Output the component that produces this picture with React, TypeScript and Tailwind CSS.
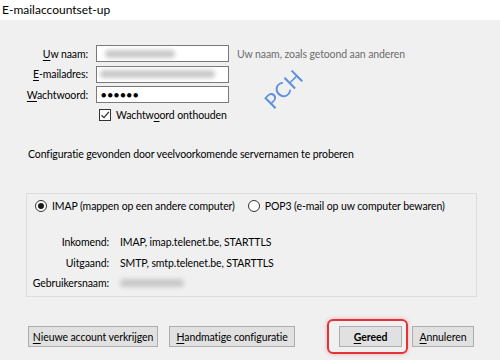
import React from "react";

const font = { fontFamily: 'Lato, "Noto Sans", sans-serif' };

const U = ({ children }: { children: React.ReactNode }) => (
  <span className="underline underline-offset-2">{children}</span>
);

const Blur = ({ w }: { w: string }) => (
  <div className={`h-[8px] ${w} rounded-sm bg-[#c9c9c9] blur-[2px]`} />
);

const Btn = ({ children, bold, w }: { children: React.ReactNode; bold?: boolean; w: string }) => (
  <div
    className={`h-[21px] ${w} flex items-center justify-center border border-[#adadad] bg-[#e1e1e1] text-black whitespace-nowrap ${
      bold ? "font-bold" : ""
    }`}
  >
    {children}
  </div>
);

const Radio = ({ checked }: { checked?: boolean }) => (
  <div className="w-[12px] h-[12px] rounded-full border border-[#333] bg-white flex items-center justify-center">
    {checked && <div className="w-[6px] h-[6px] rounded-full bg-[#1a1a1a]" />}
  </div>
);

export default function App() {
  return (
    <div
      className="w-[500px] h-[360px] bg-[#f0f0f0] flex flex-col overflow-hidden text-[10.5px] leading-[14px] tracking-[-0.1px] text-black whitespace-nowrap"
      style={font}
    >
      <div className="h-[20px] bg-white px-[2px] flex items-center leading-none text-[12px] tracking-normal">
        E-mailaccountset-up
      </div>

      <div className="relative flex flex-col">
        {/* form */}
        <div className="mt-[25px] grid grid-cols-[88px_133px_auto] gap-x-[8px] gap-y-[3.5px] items-center">
          <div className="text-right">
            <U>U</U>w naam:
          </div>
          <div className="h-[17px] border border-[#7a7a7a] bg-white flex items-center px-[8px]">
            <Blur w="w-[70px]" />
          </div>
          <div className="text-[#6d6d6d]">Uw naam, zoals getoond aan anderen</div>

          <div className="text-right">
            <U>E</U>-mailadres:
          </div>
          <div className="h-[17px] border border-[#7a7a7a] bg-white flex items-center px-[3px]">
            <Blur w="w-[115px]" />
          </div>
          <div />

          <div className="text-right">
            <U>W</U>achtwoord:
          </div>
          <div className="h-[17px] border border-[#7a7a7a] bg-white flex items-center px-[4px] text-[9px] tracking-[1px] leading-none">
            ●●●●●●
          </div>
          <div />
        </div>

        <div className="mt-[5px] h-[14px] ml-[99px] flex items-center gap-[5px]">
          <div className="w-[12px] h-[12px] border border-[#333] bg-white flex items-center justify-center">
            <svg width="10" height="10" viewBox="0 0 10 10">
              <path d="M1.5 5.2 L4 7.6 L8.8 2" fill="none" stroke="#333" strokeWidth="1.2" />
            </svg>
          </div>
          <span>
            Wachtw<U>o</U>ord onthouden
          </span>
        </div>

        <div className="mt-[25px] h-[14px] ml-[28px]">
          Configuratie gevonden door veelvoorkomende servernamen te proberen
        </div>

        {/* group box */}
        <div className="mt-[32px] ml-[26px] w-[451px] h-[104px] border border-[#dcdcdc] flex flex-col">
          <div className="mt-[5px] h-[14px] ml-[8px] flex items-center">
            <Radio checked />
            <span className="ml-[5px]">IMAP (mappen op een andere computer)</span>
            <div className="ml-[13px]">
              <Radio />
            </div>
            <span className="ml-[5px]">POP3 (e-mail op uw computer bewaren)</span>
          </div>

          <div className="mt-[22px] grid grid-cols-[82px_auto] auto-rows-[14px] gap-x-[11px] gap-y-[6.5px] items-center">
            <div className="text-right">Inkomend:</div>
            <div>IMAP, imap.telenet.be, STARTTLS</div>
            <div className="text-right">Uitgaand:</div>
            <div>SMTP, smtp.telenet.be, STARTTLS</div>
            <div className="text-right">Gebruikersnaam:</div>
            <div className="flex items-center">
              <Blur w="w-[64px]" />
            </div>
          </div>
        </div>

        {/* buttons */}
        <div className="mt-[22px] ml-[28px] flex items-center">
          <Btn w="w-[130px]">
            <U>N</U>ieuwe account verkrijgen
          </Btn>
          <div className="ml-[11px]">
            <Btn w="w-[126px]">
              <U>H</U>andmatige configuratie
            </Btn>
          </div>
          <div className="ml-auto flex items-center mr-[26px]">
            <div className="rounded-[6px] border-2 border-[#e53238] pl-[10px] pr-[4px] py-[5px] shadow-[0_0_4px_rgba(229,50,56,0.35)]">
              <Btn bold w="w-[63px]">
                <U>G</U>ereed
              </Btn>
            </div>
            <div className="ml-[4px]">
              <Btn w="w-[62px]">
                <U>A</U>nnuleren
              </Btn>
            </div>
          </div>
        </div>

        {/* PCH watermark */}
        <div className="absolute left-[261px] top-[58px] -rotate-45 text-[21px] leading-none text-[#4f86dc] tracking-[0.5px] opacity-90">
          PCH
        </div>
      </div>
    </div>
  );
}
